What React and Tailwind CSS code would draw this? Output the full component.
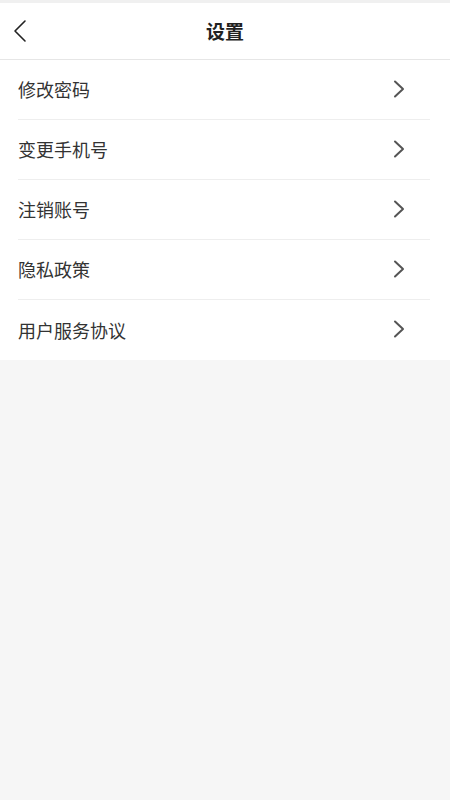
import React from 'react';

const items = ['修改密码', '变更手机号', '注销账号', '隐私政策', '用户服务协议'];

function Chevron({ className }) {
    return (
        <svg width="12" height="18" viewBox="0 0 12 18" fill="none" className={className}>
            <path d="M2 1.5 L10 9 L2 16.5" stroke="currentColor" strokeWidth="2" strokeLinecap="round" strokeLinejoin="round" />
        </svg>
    );
}

export default function App() {
    return (
        <div
            className="min-h-[800px] w-[450px] bg-[#f6f6f6] text-[#222]"
            style={{ fontFamily: '"Noto Sans CJK SC", "Noto Sans", sans-serif' }}
        >
            <div className="h-[3px] bg-[#f0f0f0]" />
            <div className="relative flex h-[57px] items-center justify-center bg-white border-b border-[#e6e6e6]">
                <button className="absolute left-[12px] top-[16px] text-[#222]">
                    <svg width="16" height="24" viewBox="0 0 16 24" fill="none">
                        <path d="M13 2 L3 12 L13 22" stroke="currentColor" strokeWidth="1.6" strokeLinecap="round" strokeLinejoin="round" />
                    </svg>
                </button>
                <h1 className="text-[19px] font-bold">设置</h1>
            </div>
            <div className="bg-white">
                {items.map((item, i) => (
                    <div key={item} className="pl-[18px] pr-[20px]">
                        <div
                            className={
                                'flex h-[60px] items-center justify-between ' +
                                (i < items.length - 1 ? 'border-b border-[#eeeeee]' : '')
                            }
                        >
                            <span className="text-[18px] text-[#333]">{item}</span>
                            <Chevron className="mr-[25px] -mt-[2px] text-[#555]" />
                        </div>
                    </div>
                ))}
            </div>
        </div>
    );
}
